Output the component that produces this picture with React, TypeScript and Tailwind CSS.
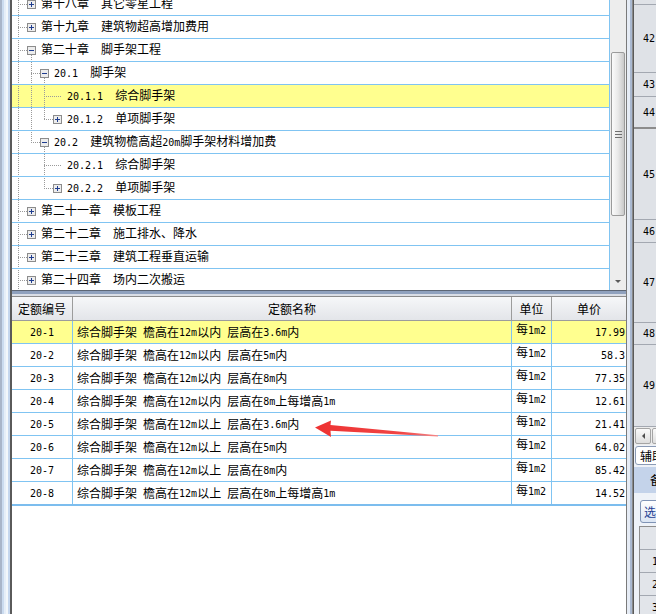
import React from 'react'

type Box = 'plus' | 'minus' | 'leaf'

interface TreeRow {
  level: number
  text: string
  box: Box
  next: boolean
  anc: boolean[]
  selected?: boolean
}

const tree: TreeRow[] = [
  { level: 1, text: '第十八章  其它零星工程', box: 'plus', next: true, anc: [] },
  { level: 1, text: '第十九章  建筑物超高增加费用', box: 'plus', next: true, anc: [] },
  { level: 1, text: '第二十章  脚手架工程', box: 'minus', next: true, anc: [] },
  { level: 2, text: '20.1  脚手架', box: 'minus', next: true, anc: [true] },
  { level: 3, text: '20.1.1  综合脚手架', box: 'leaf', next: true, anc: [true, true], selected: true },
  { level: 3, text: '20.1.2  单项脚手架', box: 'plus', next: false, anc: [true, true] },
  { level: 2, text: '20.2  建筑物檐高超20m脚手架材料增加费', box: 'minus', next: false, anc: [true] },
  { level: 3, text: '20.2.1  综合脚手架', box: 'leaf', next: true, anc: [true, false] },
  { level: 3, text: '20.2.2  单项脚手架', box: 'plus', next: false, anc: [true, false] },
  { level: 1, text: '第二十一章  模板工程', box: 'plus', next: true, anc: [] },
  { level: 1, text: '第二十二章  施工排水、降水', box: 'plus', next: true, anc: [] },
  { level: 1, text: '第二十三章  建筑工程垂直运输', box: 'plus', next: true, anc: [] },
  { level: 1, text: '第二十四章  场内二次搬运', box: 'plus', next: true, anc: [] },
]

const quotas = [
  ['20-1', '综合脚手架 檐高在12m以内 层高在3.6m内', '17.99'],
  ['20-2', '综合脚手架 檐高在12m以内 层高在5m内', '58.3'],
  ['20-3', '综合脚手架 檐高在12m以内 层高在8m内', '77.35'],
  ['20-4', '综合脚手架 檐高在12m以内 层高在8m上每增高1m', '12.61'],
  ['20-5', '综合脚手架 檐高在12m以上 层高在3.6m内', '21.41'],
  ['20-6', '综合脚手架 檐高在12m以上 层高在5m内', '64.02'],
  ['20-7', '综合脚手架 檐高在12m以上 层高在8m内', '85.42'],
  ['20-8', '综合脚手架 檐高在12m以上 层高在8m上每增高1m', '14.52'],
]

// half-width runs get a mono face so they keep the 6px cell width of the original
function Txt({ s }: { s: string }) {
  const parts = s.split(/([\x20-\x7e]+)/)
  return (
    <>
      {parts.map((p, i) =>
        /^[\x20-\x7e]+$/.test(p) ? (
          <span key={i} className="font-['DejaVu_Sans_Mono',monospace] text-[10px] whitespace-pre">
            {p}
          </span>
        ) : (
          <span key={i}>{p}</span>
        )
      )}
    </>
  )
}

function Connector({ row, odd }: { row: TreeRow; odd: boolean }) {
  const d = row.level - 1
  const w = 29 + 13 * d
  const x0 = 6 + 13 * d + 0.5
  const bx = 15 + 13 * d
  const off = odd ? 1 : 0
  return (
    <svg width={w} height={22} className="shrink-0">
      <g stroke="#9a9a9a" strokeDasharray="1 1">
        {row.anc.map((a, k) =>
          a ? <line key={k} x1={6 + 13 * k + 0.5} y1={0} x2={6 + 13 * k + 0.5} y2={22} strokeDashoffset={off} /> : null
        )}
        <line x1={x0} y1={0} x2={x0} y2={row.next ? 22 : 12} strokeDashoffset={off} />
        <line x1={x0 - 0.5} y1={11.5} x2={row.box === 'leaf' ? bx + 9 : bx} y2={11.5} />
        {row.box === 'minus' && <line x1={bx + 4.5} y1={16} x2={bx + 4.5} y2={22} strokeDashoffset={0} />}
      </g>
      {row.box !== 'leaf' && (
        <g>
          <rect x={bx + 0.5} y={7.5} width={8} height={8} fill="#ededed" stroke="#8c8c8c" />
          <line x1={bx + 2} y1={11.5} x2={bx + 7} y2={11.5} stroke="#1f3d8f" />
          {row.box === 'plus' && <line x1={bx + 4.5} y1={9} x2={bx + 4.5} y2={14} stroke="#1f3d8f" />}
        </g>
      )}
    </svg>
  )
}

function Tree() {
  return (
    <div className="flex h-[290px]">
      <div className="w-[598px] overflow-hidden border-r border-[#80c4f2]">
        <div className="-mt-[7px]">
          {tree.map((row, i) => (
            <div
              key={i}
              className={
                row.selected
                  ? 'flex items-center h-[23px] border-b border-[#80c4f2] bg-[#ffff8f]'
                  : 'flex items-center h-[23px] border-b border-[#80c4f2]'
              }
            >
              <Connector row={row} odd={i % 2 === 0} />
              <div className="whitespace-nowrap leading-[14px]">
                <Txt s={row.text} />
              </div>
            </div>
          ))}
        </div>
      </div>
      <div className="w-[16px] flex flex-col bg-[#ededed]">
        <div className="h-[52px]" />
        <div className="ml-[1px] w-[14px] h-[164px] border border-[#9b9b9b] rounded-[2px] bg-gradient-to-r from-[#fbfbfb] via-[#e9e9e9] to-[#c9c9c9] flex flex-col items-center justify-center gap-[2px]">
          <div className="w-[7px] h-[1px] bg-[#6f6f6f]" />
          <div className="w-[7px] h-[1px] bg-[#6f6f6f]" />
          <div className="w-[7px] h-[1px] bg-[#6f6f6f]" />
        </div>
        <div className="flex-1" />
        <div className="h-[17px] flex items-center justify-center">
          <div className="w-0 h-0 border-l-[3px] border-r-[3px] border-t-[3px] border-l-transparent border-r-transparent border-t-[#5a5a5a]" />
        </div>
      </div>
    </div>
  )
}

function QuotaTable() {
  return (
    <div className="flex flex-col">
      <div className="flex h-[24px] border-b border-[#9c9c9c] bg-gradient-to-b from-[#f6f7f9] to-[#e3e5e9]">
        <div className="w-[61px] border-r border-[#9c9c9c] flex items-center justify-center">定额编号</div>
        <div className="w-[439px] border-r border-[#9c9c9c] flex items-center justify-center">定额名称</div>
        <div className="w-[40px] border-r border-[#9c9c9c] flex items-center justify-center">单位</div>
        <div className="w-[74px] flex items-center justify-center">单价</div>
      </div>
      {quotas.map(([code, name, price], i) => (
        <div
          key={code}
          className={
            (i === 0 ? 'bg-[#ffff8f] ' : '') +
            (i === quotas.length - 1
              ? 'flex h-[24px] border-b-2 border-[#7cbdee]'
              : 'flex h-[23px] border-b border-[#80c4f2]')
          }
        >
          <div className="w-[61px] border-r border-[#80c4f2] flex items-center justify-center">
            <Txt s={code} />
          </div>
          <div className="w-[439px] border-r border-[#80c4f2] flex items-center pl-[4px] whitespace-nowrap overflow-hidden">
            <Txt s={name} />
          </div>
          <div className="w-[40px] border-r border-[#80c4f2] pl-[4px] pt-[1px] leading-[13px] whitespace-nowrap">
            <Txt s="每1m2" />
          </div>
          <div className="w-[74px] flex items-center justify-end pr-[1px]">
            <Txt s={price} />
          </div>
        </div>
      ))}
    </div>
  )
}

function RowNum({ n }: { n: string }) {
  return <span className="font-['DejaVu_Sans_Mono',monospace] text-[10px]">{n}</span>
}

function RightPanel() {
  return (
    <div className="w-[22px] overflow-hidden bg-[#eef2f8]">
      <div className="w-[70px] flex flex-col">
        <div className="bg-[#dfe2e7]">
          <div className="h-[5px] border-b border-[#a3a8b1]" />
          <div className="h-[68px] border-b border-[#a3a8b1] flex items-center pl-[9px]"><RowNum n="42" /></div>
          <div className="h-[24px] border-b border-[#a3a8b1] flex items-center pl-[9px]"><RowNum n="43" /></div>
          <div className="h-[32px] border-b-2 border-[#8c8c8c] flex items-center pl-[9px]"><RowNum n="44" /></div>
          <div className="h-[91px] border-b border-[#a3a8b1] flex items-center pl-[9px]"><RowNum n="45" /></div>
          <div className="h-[23px] border-b border-[#a3a8b1] flex items-center pl-[9px]"><RowNum n="46" /></div>
          <div className="h-[80px] border-b border-[#a3a8b1] flex items-center pl-[9px]"><RowNum n="47" /></div>
          <div className="h-[22px] border-b border-[#a3a8b1] flex items-center pl-[9px]"><RowNum n="48" /></div>
          <div className="h-[82px] border-b border-[#a3a8b1] flex items-center pl-[9px]"><RowNum n="49" /></div>
        </div>
        <div className="h-[18px] bg-[#ececec] flex items-center gap-[1px] pl-[1px]">
          <div className="w-[16px] h-[16px] border border-[#a5a5a5] rounded-[2px] bg-gradient-to-b from-[#fafafa] to-[#dedede] flex items-center justify-center">
            <div className="w-0 h-0 border-t-[3px] border-b-[3px] border-r-[3px] border-t-transparent border-b-transparent border-r-[#4d4d4d]" />
          </div>
          <div className="w-[30px] h-[16px] border border-[#a5a5a5] rounded-[2px] bg-gradient-to-b from-[#fafafa] to-[#dedede]" />
        </div>
        <div className="h-[22px] pt-[1px] pl-[1px]">
          <div className="w-[44px] h-[19px] border border-[#8a9ab5] rounded-[3px] bg-white flex items-center pl-[4px] whitespace-nowrap">
            辅助
          </div>
        </div>
        <div className="h-[26px] bg-[#c4d3ea] flex items-center pl-[16px] whitespace-nowrap">备注</div>
        <div className="h-[33px] pt-[7px] pl-[6px]">
          <div className="w-[40px] h-[23px] border border-[#7f93b5] rounded-[3px] bg-gradient-to-b from-white to-[#dbe5f3] flex items-center pl-[3px] text-[#1f3f93] whitespace-nowrap">
            选择
          </div>
        </div>
        <div className="ml-[5px] border-l border-t border-[#8d8d8d] bg-[#e2e5ea]">
          <div className="h-[23px] border-b border-[#a3a8b1]" />
          <div className="h-[23px] border-b border-[#a3a8b1] flex items-center pl-[12px]"><RowNum n="1" /></div>
          <div className="h-[23px] border-b border-[#a3a8b1] flex items-center pl-[12px]"><RowNum n="2" /></div>
          <div className="h-[23px] border-b border-[#a3a8b1] flex items-center pl-[12px]"><RowNum n="3" /></div>
        </div>
      </div>
    </div>
  )
}

function Arrow() {
  return (
    <svg width={130} height={24} className="absolute left-[312px] top-[417px] pointer-events-none">
      <defs>
        <linearGradient id="arrowFade" x1="0" y1="0" x2="1" y2="0">
          <stop offset="0" stopColor="#ee3232" />
          <stop offset="0.7" stopColor="#f04545" />
          <stop offset="1" stopColor="#f58a8a" />
        </linearGradient>
      </defs>
      <polygon
        points="3,10.5 19,3.5 18.5,8 126,18.2 126,19.6 18.5,13.8 19,20"
        fill="url(#arrowFade)"
      />
    </svg>
  )
}

export default function App() {
  return (
    <div className="relative w-[656px] h-[614px] overflow-hidden flex bg-white text-black text-[12px] font-['Noto_Sans_CJK_SC',sans-serif]">
      <div className="w-[12px] flex shrink-0">
        <div className="w-[2px] bg-[#a9b5c9]" />
        <div className="w-[2px] bg-[#cbdbef]" />
        <div className="w-[2px] bg-[#e6eef8]" />
        <div className="w-[2px] bg-[#f3f7fb]" />
        <div className="w-[2px] bg-[#c6d7ee]" />
        <div className="w-[2px] bg-[#5a5a5a]" />
      </div>
      <div className="w-[615px] shrink-0 flex flex-col border-r border-[#7a7a7a]">
        <Tree />
        <div className="flex flex-col">
          <div className="h-[1px] bg-[#5d6675]" />
          <div className="h-[3px] bg-[#8fa1be]" />
          <div className="h-[2px] bg-[#d9dde5]" />
          <div className="h-[1px] bg-[#8b8b8b]" />
        </div>
        <QuotaTable />
      </div>
      <div className="w-[7px] shrink-0 flex">
        <div className="w-[3px] bg-[#e6ecf5]" />
        <div className="w-[2px] bg-[#aab9d1]" />
        <div className="w-[1px] bg-[#8a8a8a]" />
        <div className="w-[1px] bg-[#5a5a5a]" />
      </div>
      <RightPanel />
      <Arrow />
    </div>
  )
}
